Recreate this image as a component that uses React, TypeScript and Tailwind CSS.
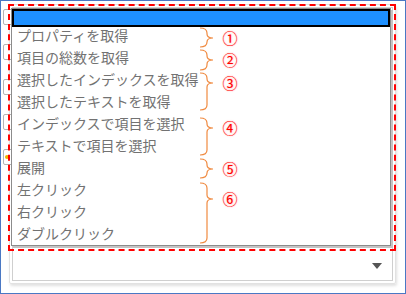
import React from 'react'

const items = [
  'プロパティを取得',
  '項目の総数を取得',
  '選択したインデックスを取得',
  '選択したテキストを取得',
  'インデックスで項目を選択',
  'テキストで項目を選択',
  '展開',
  '左クリック',
  '右クリック',
  'ダブルクリック',
]

// brace: top, tip, bottom (y in px)
const braces = [
  { top: 27, tip: 37, bottom: 46, label: '①' },
  { top: 49, tip: 59, bottom: 69, label: '②' },
  { top: 72, tip: 82, bottom: 109, label: '③' },
  { top: 117, tip: 127, bottom: 154, label: '④' },
  { top: 158, tip: 168, bottom: 177, label: '⑤' },
  { top: 182, tip: 198, bottom: 242, label: '⑥' },
]

const bracePath = (t: number, m: number, b: number) =>
  `M199 ${t} Q206 ${t} 206 ${t + 5} L206 ${m - 4} Q206 ${m} 212 ${m} Q206 ${m} 206 ${m + 4} L206 ${b - 5} Q206 ${b} 199 ${b}`

export default function App() {
  return (
    <div
      className="relative w-[406px] h-[294px] overflow-hidden border border-[#4a78c4] bg-white"
      style={{ fontFamily: '"Noto Sans CJK JP", "Noto Sans", sans-serif' }}
    >
      {/* underlying controls */}
      <div className="flex h-full">
        <div className="flex flex-col gap-[19px] pt-[8px] pl-[2px] w-[8px]">
          {[0, 1, 2, 3, 4].map((i) => (
            <div key={i} className="relative w-[10px] h-[16px] rounded-[2px] border border-[#b4b4b4] bg-white">
              {i === 4 && <span className="absolute left-[1px] top-[5px] w-[4px] h-[4px] rounded-full bg-[#f0b400]" />}
            </div>
          ))}
        </div>
        <div className="flex-1 pt-[3px] pb-[9px] pr-[9px] pl-0">
          <div className="h-full rounded-[2px] border border-[#e2e2e2] shadow-[1px_2px_3px_rgba(0,0,0,0.12)] p-[2px]">
            <div className="h-full border border-[#cfcfcf] bg-white flex items-end justify-end pr-[10px] pb-[11px]">
              <svg width="10" height="6" viewBox="0 0 10 6">
                <path d="M0 0 L10 0 L5 6 Z" fill="#555" />
              </svg>
            </div>
          </div>
        </div>
      </div>

      {/* dropdown popup */}
      <div className="absolute left-[10px] top-[7px] w-[380px] h-[238px] border border-[#8c8c8c] bg-white shadow-[2px_2px_0_#c4c4c4]">
        <div className="h-[18px] border-2 border-black bg-[#1e90ff]" />
        <ul className="-mt-[3px]">
          {items.map((t) => (
            <li key={t} className="h-[22px] leading-[22px] pl-[5px] text-[14px] text-[#727272] whitespace-nowrap">
              {t}
            </li>
          ))}
        </ul>
      </div>

      {/* red dashed highlight */}
      <div className="absolute left-[7px] top-[3px] w-[388px] h-[247px] border-2 border-dashed border-[#ff0000]" />

      {/* annotations */}
      <svg className="absolute left-0 top-0 pointer-events-none" width="406" height="294">
        {braces.map((b) => (
          <path key={b.label} d={bracePath(b.top, b.tip, b.bottom)} fill="none" stroke="#f08a40" strokeWidth="1.2" />
        ))}
      </svg>
      {braces.map((b) => (
        <span
          key={b.label}
          className="absolute left-[220px] w-[18px] text-center text-[15px] leading-[18px] text-[#ff0000] [text-shadow:0_0_2px_#ffb0b0,0_0_1px_#ffb0b0]"
          style={{ top: b.tip - 9 }}
        >
          {b.label}
        </span>
      ))}
    </div>
  )
}
